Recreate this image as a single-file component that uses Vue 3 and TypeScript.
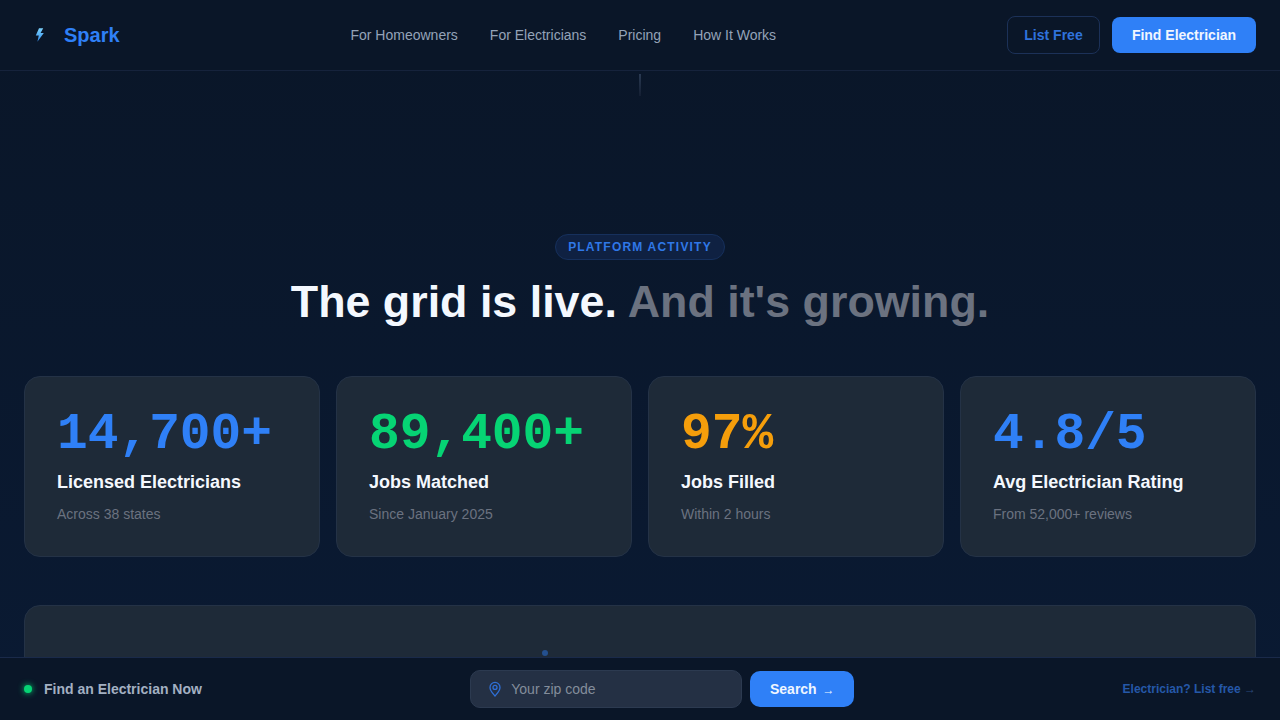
<script setup lang="ts">
const navLinks: string[] = ["For Homeowners", "For Electricians", "Pricing", "How It Works"];

const stats = [
  { value: "14,700+", label: "Licensed Electricians", note: "Across 38 states", color: "#2f80f7" },
  { value: "89,400+", label: "Jobs Matched", note: "Since January 2025", color: "#06d474" },
  { value: "97%", label: "Jobs Filled", note: "Within 2 hours", color: "#f59e0b" },
  { value: "4.8/5", label: "Avg Electrician Rating", note: "From 52,000+ reviews", color: "#2f80f7" },
];
</script>

<template>
  <div class="page">
    <header class="topbar">
      <div class="brand">
        <span class="bolt">
          <svg width="12" height="16" viewBox="0 0 12 16">
            <defs>
              <linearGradient id="boltFill" x1="0" y1="0" x2="0" y2="1">
                <stop offset="0" stop-color="#7dd3fc" />
                <stop offset="1" stop-color="#2f8cf0" />
              </linearGradient>
            </defs>
            <path d="M5 1.2 L1.8 8.6 L4.8 8.6 L3.4 14.8 L9.8 6 L6.6 6 L9.2 1.2 Z" fill="url(#boltFill)" />
          </svg>
        </span>
        <span class="brand-name">Spark</span>
      </div>
      <nav class="nav">
        <a v-for="link in navLinks" :key="link">{{ link }}</a>
      </nav>
      <div class="actions">
        <button class="btn-outline">List Free</button>
        <button class="btn-solid">Find Electrician</button>
      </div>
    </header>

    <main class="content">
      <div class="scroll-line"></div>
      <section class="intro">
        <span class="pill">PLATFORM ACTIVITY</span>
        <h1>The grid is live. <span>And it's growing.</span></h1>
      </section>

      <section class="stats">
        <div v-for="s in stats" :key="s.label" class="card">
          <div class="value" :style="{ color: s.color }">{{ s.value }}</div>
          <div class="label">{{ s.label }}</div>
          <div class="note">{{ s.note }}</div>
        </div>
      </section>

      <section class="panel">
        <i class="spot"></i>
      </section>
    </main>

    <footer class="dock">
      <div class="dock-left">
        <i class="live"></i>
        <span>Find an Electrician Now</span>
      </div>
      <div class="dock-search">
        <label class="zip">
          <svg width="14" height="16" viewBox="0 0 14 16" fill="none" stroke="#2f6fd6" stroke-width="1.3">
            <path d="M7 15 C4.4 12 2 9.6 2 6.4 A5 5 0 0 1 12 6.4 C12 9.6 9.6 12 7 15 Z" />
            <circle cx="7" cy="6.4" r="2" />
          </svg>
          <span>Your zip code</span>
        </label>
        <button class="search-btn">Search <small>→</small></button>
      </div>
      <a class="dock-link">Electrician? List free <small>→</small></a>
    </footer>
  </div>
</template>

<style>
html,
body {
  margin: 0;
  height: 100%;
  overflow: hidden;
  background: #0a1628;
}
</style>

<style scoped>
.page {
  height: 720px;
  overflow: hidden;
  position: relative;
  font-family: "Liberation Sans", Arial, sans-serif;
  background: linear-gradient(180deg, #0a1628 0%, #0a1a33 100%);
  color: #fff;
}

.topbar {
  height: 70px;
  display: flex;
  justify-content: space-between;
  align-items: center;
  padding: 0 24px;
  background: #0a1628;
  border-bottom: 1px solid #16233c;
}

.brand {
  display: flex;
  align-items: center;
  gap: 8px;
}

.bolt {
  width: 32px;
  height: 32px;
  display: flex;
  align-items: center;
  justify-content: center;
}

.brand-name {
  font-size: 20px;
  font-weight: 700;
  color: #2f80f7;
}

.nav {
  display: flex;
  gap: 32px;
  font-size: 14px;
  color: #94a3b8;
}

.actions {
  display: flex;
  align-items: center;
  gap: 12px;
}

button {
  font-family: inherit;
  font-weight: 700;
  font-size: 14px;
  border: 0;
}

.btn-outline {
  width: 93px;
  height: 38px;
  border-radius: 8px;
  background: transparent;
  border: 1px solid #1c3158;
  color: #2f72dc;
}

.btn-solid {
  width: 144px;
  height: 36px;
  border-radius: 8px;
  background: #2f80f7;
  color: #f0f6ff;
}

.content {
  position: relative;
  padding: 0 24px;
}

.scroll-line {
  position: absolute;
  left: 639px;
  top: 3px;
  width: 2px;
  height: 22px;
  background: linear-gradient(180deg, #2a3a52, #141f33);
}

.intro {
  padding-top: 163px;
  display: flex;
  flex-direction: column;
  align-items: center;
}

.pill {
  box-sizing: border-box;
  height: 26px;
  line-height: 24px;
  padding: 0 12px;
  border-radius: 13px;
  background: #0f2142;
  border: 1px solid #16305c;
  font-size: 12px;
  font-weight: 700;
  letter-spacing: 1.2px;
  color: #2f78e8;
}

h1 {
  margin: 15px 0 0;
  font-size: 44.8px;
  line-height: 52px;
  font-weight: 700;
  color: #f4f8fe;
}

h1 span {
  color: #6b7280;
}

.stats {
  margin-top: 49px;
  display: grid;
  grid-template-columns: repeat(4, 1fr);
  gap: 16px;
}

.card {
  box-sizing: border-box;
  height: 181px;
  padding: 32px;
  border-radius: 16px;
  background: #1e2a38;
  border: 1px solid #243246;
}

.value {
  font-family: "Liberation Mono", "Courier New", monospace;
  font-weight: 700;
  font-size: 51.2px;
  line-height: 51px;
}

.label {
  margin-top: 11px;
  font-size: 18px;
  line-height: 22px;
  font-weight: 700;
  color: #f4f8fe;
}

.note {
  margin-top: 12px;
  font-size: 14px;
  line-height: 18px;
  color: #6b7280;
}

.panel {
  position: relative;
  margin-top: 48px;
  height: 200px;
  border-radius: 16px;
  background: #1e2a38;
  border: 1px solid #243246;
  box-sizing: border-box;
}

.spot {
  position: absolute;
  left: 517px;
  top: 44px;
  width: 6px;
  height: 6px;
  border-radius: 50%;
  background: #24508f;
}

.dock {
  position: absolute;
  left: 0;
  right: 0;
  bottom: 0;
  height: 62px;
  display: flex;
  justify-content: space-between;
  align-items: center;
  padding: 0 24px;
  background: #0a1628;
  border-top: 1px solid #1a2a4a;
}

.dock-left {
  display: flex;
  align-items: center;
  gap: 12px;
  font-size: 14px;
  font-weight: 700;
  color: #a3b0c2;
}

.live {
  width: 8px;
  height: 8px;
  border-radius: 50%;
  background: #06d474;
  box-shadow: 0 0 6px #06d474;
}

.dock-search {
  display: flex;
  align-items: center;
  gap: 8px;
}

.zip {
  box-sizing: border-box;
  width: 272px;
  height: 38px;
  display: flex;
  align-items: center;
  gap: 9px;
  padding: 0 17px;
  border-radius: 10px;
  background: #243044;
  border: 1px solid #2c3a50;
  font-size: 14px;
  color: #838d9b;
}

.search-btn {
  width: 104px;
  height: 36px;
  border-radius: 10px;
  background: #2f80f7;
  color: #f0f6ff;
}

.search-btn small {
  font-size: 12px;
  margin-left: 2px;
}

.dock-link {
  font-size: 12px;
  font-weight: 700;
  color: #2558a8;
}

.dock-link small {
  font-size: 12px;
  font-weight: 400;
  color: #2a4a7c;
}
</style>
